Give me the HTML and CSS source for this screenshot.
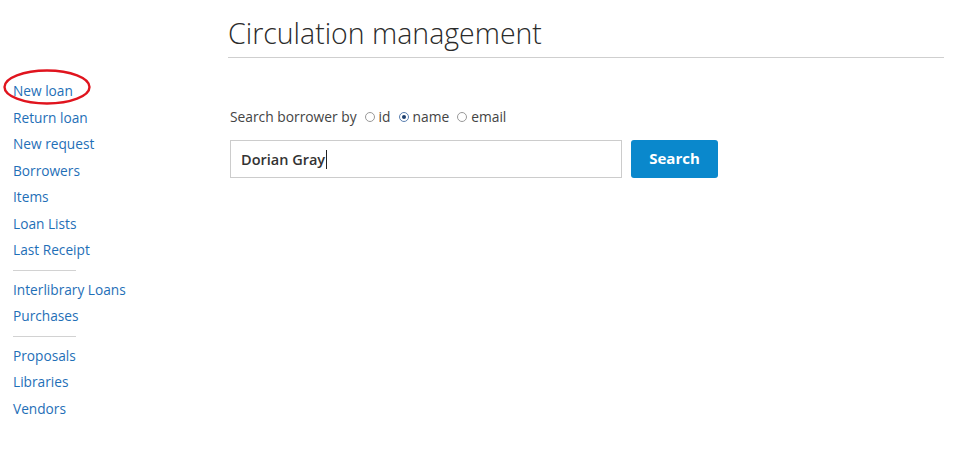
FILE: index.html
```html
<!DOCTYPE html>
<html>
<head>
<meta charset="utf-8">
<link rel="stylesheet" href="styles.css">
</head>
<body>
<div class="layout">
  <nav class="sidebar">
    <ul class="nav-group">
      <li class="nav-item current"><a href="#">New loan</a>
        <svg class="mark" width="90" height="38" viewBox="0 0 90 38"><ellipse cx="45" cy="19" rx="42.5" ry="16.5" fill="none" stroke="#e0141e" stroke-width="2.4"/></svg>
      </li>
      <li class="nav-item"><a href="#">Return loan</a></li>
      <li class="nav-item"><a href="#">New request</a></li>
      <li class="nav-item"><a href="#">Borrowers</a></li>
      <li class="nav-item"><a href="#">Items</a></li>
      <li class="nav-item"><a href="#">Loan Lists</a></li>
      <li class="nav-item"><a href="#">Last Receipt</a></li>
    </ul>
    <div class="nav-sep"></div>
    <ul class="nav-group">
      <li class="nav-item"><a href="#">Interlibrary Loans</a></li>
      <li class="nav-item"><a href="#">Purchases</a></li>
    </ul>
    <div class="nav-sep"></div>
    <ul class="nav-group">
      <li class="nav-item"><a href="#">Proposals</a></li>
      <li class="nav-item"><a href="#">Libraries</a></li>
      <li class="nav-item"><a href="#">Vendors</a></li>
    </ul>
  </nav>
  <main class="main">
    <h1 class="title">Circulation management</h1>
    <form class="search-form">
      <div class="search-by">
        <span>Search borrower by</span>
        <label class="radio"><span class="dot"></span>id</label>
        <label class="radio"><span class="dot checked"></span>name</label>
        <label class="radio"><span class="dot"></span>email</label>
      </div>
      <div class="search-row">
        <div class="search-input"><span class="value">Dorian Gray</span><span class="caret"></span></div>
        <button type="button" class="btn">Search</button>
      </div>
    </form>
  </main>
</div>
</body>
</html>
```
FILE: styles.css
```css
html, body {
  margin: 0;
  padding: 0;
  background: #fff;
}
body {
  font-family: "Open Sans", "DejaVu Sans", sans-serif;
  color: #333;
}
.layout {
  display: flex;
}
.sidebar {
  width: 228px;
  flex: none;
  box-sizing: border-box;
  padding: 78px 0 0 13px;
}
.nav-group {
  list-style: none;
  margin: 0;
  padding: 0;
}
.nav-item {
  line-height: 26.5px;
  font-size: 13.7px;
  position: relative;
}
.nav-item a {
  color: #1f6fb7;
  text-decoration: none;
}
.mark {
  position: absolute;
  left: -11px;
  top: -10px;
}
.nav-sep {
  width: 63px;
  height: 1px;
  background: #d2d2d2;
  margin: 6px 0;
}
.main {
  flex: 1;
  padding-right: 16px;
}
.title {
  margin: 0;
  padding-top: 15px;
  padding-bottom: 6px;
  font-size: 28.5px;
  line-height: 36px;
  font-weight: 300;
  color: #2b2b2b;
  border-bottom: 1px solid #cfcfcf;
}
.search-form {
  padding-top: 49px;
  padding-left: 2px;
}
.search-by {
  display: flex;
  align-items: center;
  font-size: 13.8px;
  color: #444;
  line-height: 20px;
  gap: 8px;
}
.radio {
  display: flex;
  align-items: center;
  gap: 4px;
}
.dot {
  width: 8px;
  height: 8px;
  border: 1px solid #999;
  border-radius: 50%;
  box-sizing: content-box;
  background: #fff;
  position: relative;
}
.dot.checked {
  border-color: #5a7fb0;
}
.dot.checked::after {
  content: "";
  position: absolute;
  left: 2px;
  top: 2px;
  width: 4px;
  height: 4px;
  border-radius: 50%;
  background: #1d3f6e;
}
.search-row {
  display: flex;
  gap: 9px;
  margin-top: 13px;
}
.search-input {
  width: 392px;
  height: 38px;
  box-sizing: border-box;
  border: 1px solid #cccccc;
  display: flex;
  align-items: center;
  padding-left: 10px;
  font-size: 14.5px;
  font-weight: 600;
  color: #333;
}
.caret {
  width: 1px;
  height: 19px;
  background: #222;
  margin-left: 1px;
}
.btn {
  width: 87px;
  height: 38px;
  border: none;
  border-radius: 3px;
  background: #0a88cc;
  color: #fff;
  font-family: "Open Sans", "DejaVu Sans", sans-serif;
  font-weight: 700;
  font-size: 15px;
  padding: 0 0 2px;
}
```
